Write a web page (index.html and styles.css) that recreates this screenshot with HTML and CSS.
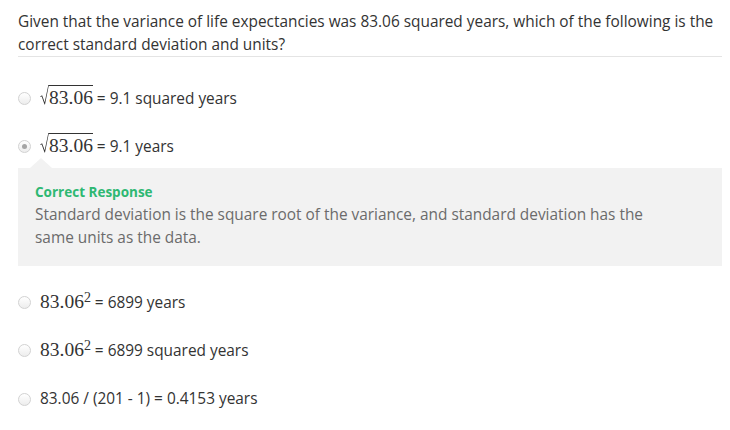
FILE: index.html
```html
<!DOCTYPE html>
<html lang="en">
<head>
<meta charset="utf-8">
<title>Standard deviation question</title>
<link rel="stylesheet" href="styles.css">
</head>
<body>
<div class="page">
  <div class="question">Given that the variance of life expectancies was 83.06 squared years, which of the following is the correct standard deviation and units?</div>
  <div class="options">
    <div class="option">
      <span class="radio"></span>
      <span class="label"><span class="math"><span class="sqrt"><svg class="radical" width="9" height="20" viewBox="0 0 9 20"><path d="M0.2 11.4 L2.1 10.2 L4.7 17.2 L8.3 0 L9 0 L9 0.9 L8.7 0.9 L5 19.6 L4.5 19.6 L1.7 11.6 L0.5 12.1 Z" fill="#333"/></svg><span class="radicand">83.06</span></span></span> = 9.1 squared years</span>
    </div>
    <div class="option">
      <span class="radio radio-checked"></span>
      <span class="label"><span class="math"><span class="sqrt"><svg class="radical" width="9" height="20" viewBox="0 0 9 20"><path d="M0.2 11.4 L2.1 10.2 L4.7 17.2 L8.3 0 L9 0 L9 0.9 L8.7 0.9 L5 19.6 L4.5 19.6 L1.7 11.6 L0.5 12.1 Z" fill="#333"/></svg><span class="radicand">83.06</span></span></span> = 9.1 years</span>
    </div>
    <div class="feedback">
      <div class="feedback-title">Correct Response</div>
      <div class="feedback-text">Standard deviation is the square root of the variance, and standard deviation has the same units as the data.</div>
    </div>
    <div class="option">
      <span class="radio"></span>
      <span class="label"><span class="math">83.06<sup class="sup">2</sup></span> = 6899 years</span>
    </div>
    <div class="option">
      <span class="radio"></span>
      <span class="label"><span class="math">83.06<sup class="sup">2</sup></span> = 6899 squared years</span>
    </div>
    <div class="option option-last">
      <span class="radio"></span>
      <span class="label">83.06 / (201 - 1) = 0.4153 years</span>
    </div>
  </div>
</div>
</body>
</html>
```
FILE: styles.css
```css
html, body {
  margin: 0;
  padding: 0;
  background: #ffffff;
}

body {
  font-family: "Open Sans", "Liberation Sans", sans-serif;
  font-size: 15.4px;
  color: #333333;
}

.page {
  width: 704px;
  padding-left: 18px;
}

.question {
  padding-top: 10px;
  line-height: 23px;
  border-bottom: 1px solid #e4e4e4;
}

.options {
  display: flex;
  flex-direction: column;
  gap: 24px;
  padding-top: 29px;
}

.option {
  display: flex;
  align-items: center;
  height: 24px;
}

.option-last {
  margin-top: 1px;
}

.radio {
  box-sizing: border-box;
  width: 13px;
  height: 13px;
  border-radius: 50%;
  border: 1px solid #d2d2d2;
  background: linear-gradient(#ffffff, #ededed);
  margin-right: 9px;
  flex: none;
  display: flex;
  align-items: center;
  justify-content: center;
}

.radio-checked::after {
  content: "";
  width: 5px;
  height: 5px;
  border-radius: 50%;
  background: #a5a5a5;
}

.label {
  line-height: 24px;
  white-space: nowrap;
}

.math {
  font-family: "Liberation Serif", "Times New Roman", serif;
  font-size: 19.5px;
  color: #333333;
}

.sqrt {
  display: inline-block;
  line-height: 24px;
}

.radical {
  vertical-align: -1px;
}

.radicand {
  display: inline-block;
  line-height: 19.5px;
  padding-top: 2px;
  border-top: 1px solid #333333;
}

.sup {
  font-size: 14px;
  vertical-align: 6px;
  line-height: 0;
}

.feedback {
  position: relative;
  margin-top: -14px;
  background: #f2f2f2;
  padding: 13px 17px 17px 17px;
}

.feedback::before {
  content: "";
  position: absolute;
  top: -10px;
  left: 12px;
  border-left: 11px solid transparent;
  border-right: 11px solid transparent;
  border-bottom: 10px solid #f2f2f2;
}

.feedback-title {
  font-weight: 700;
  font-size: 13.5px;
  line-height: 22px;
  color: #2eb872;
}

.feedback-text {
  max-width: 630px;
  line-height: 23px;
  color: #6b6b6b;
}
```
